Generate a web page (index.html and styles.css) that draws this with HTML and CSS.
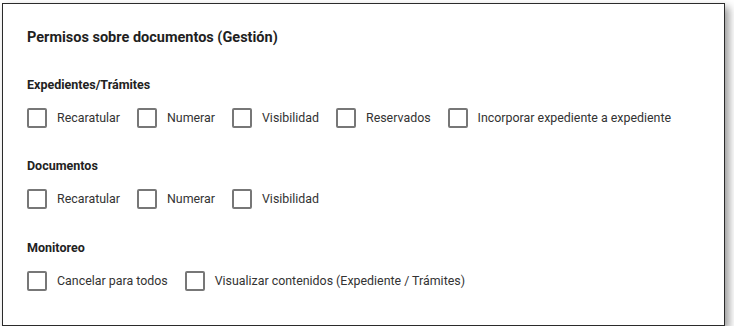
FILE: index.html
```html
<!DOCTYPE html>
<html lang="es">
<head>
  <meta charset="UTF-8">
  <title>Permisos sobre documentos</title>
  <link rel="stylesheet" href="styles.css">
</head>
<body>
  <div class="card">
    <h2 class="card-title">Permisos sobre documentos (Gestión)</h2>

    <!-- Expedientes -->
    <div class="group">
      <div class="group-title">Expedientes/Trámites</div>
      <div class="options">
        <label class="option"><span class="box"></span>Recaratular</label>
        <label class="option"><span class="box"></span>Numerar</label>
        <label class="option"><span class="box"></span>Visibilidad</label>
        <label class="option"><span class="box"></span>Reservados</label>
        <label class="option"><span class="box"></span>Incorporar expediente a expediente</label>
      </div>
    </div>

    <!-- Documentos -->
    <div class="group">
      <div class="group-title">Documentos</div>
      <div class="options">
        <label class="option"><span class="box"></span>Recaratular</label>
        <label class="option"><span class="box"></span>Numerar</label>
        <label class="option"><span class="box"></span>Visibilidad</label>
      </div>
    </div>

    <!-- Monitoreo -->
    <div class="group last">
      <div class="group-title">Monitoreo</div>
      <div class="options">
        <label class="option"><span class="box"></span>Cancelar para todos</label>
        <label class="option"><span class="box"></span>Visualizar contenidos (Expediente / Trámites)</label>
      </div>
    </div>
  </div>
</body>
</html>
```

FILE: styles.css
```css
body {
  margin: 0;
  padding: 3px 0 0 2px;
  font-family: Roboto, "Liberation Sans", sans-serif;
  background: #fff;
}

/* tarjeta con borde oscuro y sombra */
.card {
  width: 723px;
  height: 323px;
  box-sizing: border-box;
  border: 1px solid #2b2b2b;
  background: #fff;
  box-shadow: 4px 4px 8px rgba(0, 0, 0, 0.4);
  padding: 24px 24px 0;
}

.card-title {
  margin: 0;
  font-size: 14.5px;
  font-weight: 700;
  line-height: 20px;
  color: #1f1f1f;
}

.group {
  margin-top: 29px;
}

.group + .group {
  margin-top: 30px;
}

.group.last {
  margin-top: 31px;
}

.group-title {
  font-size: 12.5px;
  font-weight: 700;
  line-height: 16px;
  color: #222;
  margin-bottom: 15px;
}

.options {
  display: flex;
  gap: 17px;
}

.option {
  display: flex;
  align-items: center;
  gap: 10px;
  font-size: 12.4px;
  line-height: 20px;
  color: #333;
}

/* casilla sin marcar */
.box {
  width: 20px;
  height: 20px;
  box-sizing: border-box;
  border: 2px solid #777;
  border-radius: 2px;
}
```
